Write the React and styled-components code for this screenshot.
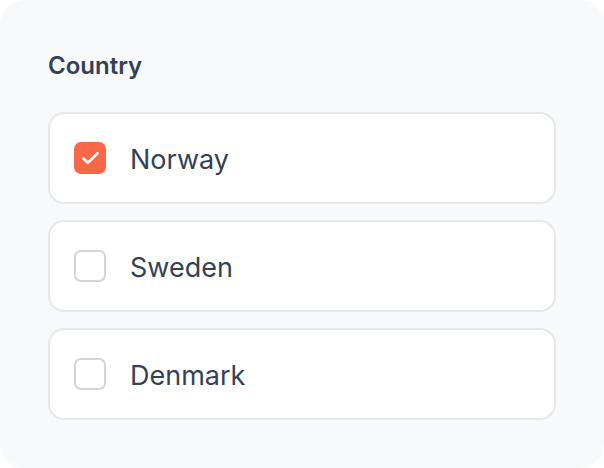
import React, { useState } from 'react';
import styled, { createGlobalStyle } from 'styled-components';

const GlobalStyle = createGlobalStyle`
	html, body {
		margin: 0;
		padding: 0;
		background: #ffffff;
	}
	body {
		font-family: Inter, "Noto Sans", sans-serif;
		-webkit-font-smoothing: antialiased;
	}
`;

const Card = styled.div`
	box-sizing: border-box;
	width: 604px;
	height: 468px;
	background: #f8f9fb;
	border-radius: 24px;
	padding: 50px 48px 0 48px;
`;

const Title = styled.h2`
	margin: 0 0 30px 0;
	font-size: 24px;
	line-height: 32px;
	font-weight: 600;
	color: #334155;
`;

const List = styled.div`
	display: flex;
	flex-direction: column;
	gap: 16px;
`;

const Row = styled.label`
	box-sizing: border-box;
	height: 92px;
	display: flex;
	align-items: center;
	gap: 24px;
	padding: 0 24px;
	background: #ffffff;
	border: 2px solid #e5e7eb;
	border-radius: 16px;
	cursor: pointer;
`;

const Box = styled.span`
	box-sizing: border-box;
	width: 32px;
	height: 32px;
	flex: none;
	display: flex;
	align-items: center;
	justify-content: center;
	border-radius: 7px;
	background: ${props => (props.checked ? '#f86846' : '#ffffff')};
	border: ${props => (props.checked ? 'none' : '2.5px solid #d1d5db')};
`;

const Label = styled.span`
	padding-top: 3px;
	font-size: 27px;
	line-height: 36px;
	font-weight: 400;
	color: #334155;
`;

const CheckMark = () => (
	<svg width="21" height="21" viewBox="0 0 24 24" fill="none" stroke="#ffffff" strokeWidth="3" strokeLinecap="round" strokeLinejoin="round">
		<polyline points="20 6 9 17 4 12" />
	</svg>
);

const countries = ['Norway', 'Sweden', 'Denmark'];

export default function App() {
	const [selected, setSelected] = useState(['Norway']);

	const toggle = (name) => {
		setSelected((prev) => (prev.includes(name) ? prev.filter((n) => n !== name) : [...prev, name]));
	};

	return (
		<>
			<GlobalStyle />
			<Card>
				<Title>Country</Title>
				<List>
					{countries.map((name) => {
						const checked = selected.includes(name);
						return (
							<Row key={name} onClick={() => toggle(name)}>
								<Box checked={checked}>{checked && <CheckMark />}</Box>
								<Label>{name}</Label>
							</Row>
						);
					})}
				</List>
			</Card>
		</>
	);
}
